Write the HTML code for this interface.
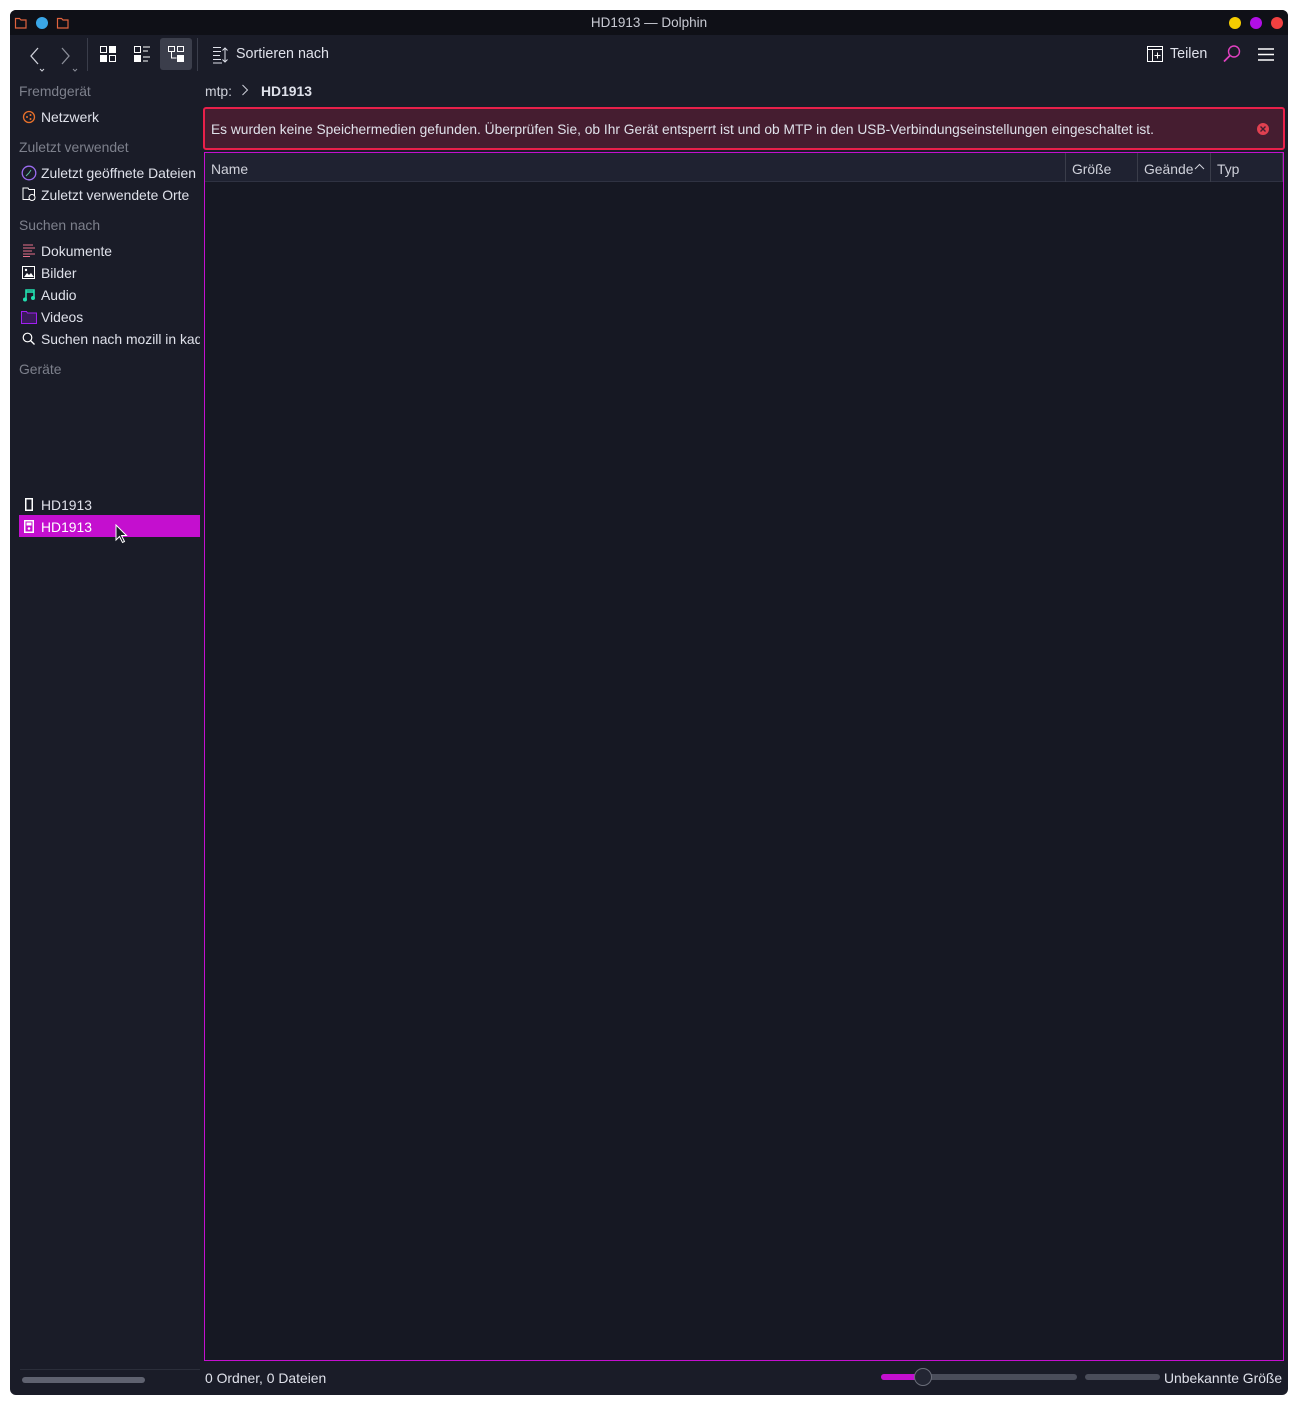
<!DOCTYPE html>
<html><head><meta charset="utf-8"><style>
*{box-sizing:border-box;margin:0;padding:0}
body{width:1298px;height:1405px;background:#fff;font-family:"Liberation Sans","DejaVu Sans",sans-serif;font-size:13.9px;color:#dfe1ea;position:relative;overflow:hidden}
.win{position:absolute;left:10px;top:10px;width:1278px;height:1385px;background:#1a1c28;border-radius:6px;overflow:hidden}
.title{position:absolute;left:0;top:0;width:100%;height:25px;background:#0f1017;text-align:center;line-height:26px;color:#c8cad3;font-size:13.5px}
.a{position:absolute;white-space:nowrap}
.dot{position:absolute;width:12px;height:12px;border-radius:50%;top:7px}
.side{color:#dfe1ea}
.hdr{color:#7d808c}
.sep{position:absolute;width:1px;background:#3a3d4a}
</style></head><body>
<div class="win">
<div class="title">HD1913 — Dolphin</div>
<svg class="a" style="left:4px;top:6px" width="60" height="14"><path d="M1.5 2.5h4l1.5 1.5h5v8h-10.5z" fill="none" stroke="#e0633e" stroke-width="1.2"/><circle cx="28" cy="7" r="6" fill="#3aa7e8"/><path d="M43.5 2.5h4l1.5 1.5h5v8h-10.5z" fill="none" stroke="#e0633e" stroke-width="1.2"/></svg>
<div class="dot" style="left:1219px;background:#f5cc00"></div>
<div class="dot" style="left:1240px;background:#b10ee6"></div>
<div class="dot" style="left:1261px;background:#f04040"></div>

<svg class="a" style="left:14px;top:34px" width="60" height="30"><path d="M14 4l-7 8 7 8" fill="none" stroke="#cfd1da" stroke-width="1.3"/><path d="M16 25l2 2 2-2" fill="none" stroke="#cfd1da"/><path d="M38 4l7 8-7 8" fill="none" stroke="#8a8d98" stroke-width="1.3"/><path d="M49 25l2 2 2-2" fill="none" stroke="#8a8d98"/></svg>
<div class="sep" style="left:77px;top:28px;height:33px"></div>
<svg class="a" style="left:90px;top:36px" width="16" height="16"><rect x="0.5" y="0.5" width="6" height="6" fill="none" stroke="#fff"/><rect x="9" y="0" width="7" height="7" fill="#fff"/><rect x="0" y="9" width="7" height="7" fill="#fff"/><rect x="9.5" y="9.5" width="6" height="6" fill="none" stroke="#fff"/></svg>
<svg class="a" style="left:124px;top:36px" width="16" height="16"><rect x="0.5" y="0.5" width="6" height="6" fill="none" stroke="#fff"/><rect x="0" y="9" width="7" height="7" fill="#fff"/><path d="M9 1h7M9 5h5M9 11h7M9 15h5" stroke="#fff"/></svg>
<div class="a" style="left:150px;top:28px;width:32px;height:32px;background:#3b3e4b;border-radius:3px"></div>
<svg class="a" style="left:158px;top:36px" width="16" height="16"><rect x="0.5" y="0.5" width="6" height="5" fill="none" stroke="#fff"/><rect x="9.5" y="0.5" width="6" height="5" fill="none" stroke="#fff"/><rect x="9" y="9" width="7" height="7" fill="#fff"/><path d="M3.5 6v6h5" fill="none" stroke="#fff"/></svg>
<div class="sep" style="left:187px;top:28px;height:33px"></div>
<svg class="a" style="left:202px;top:36px" width="18" height="18"><path d="M1 1.5h8M1 5.5h8M1 9.5h7M1 13.5h8M1 17h9" stroke="#dfe1ea"/><path d="M13 2v14M10.5 4.5l2.5-2.5 2.5 2.5M10.5 13.5l2.5 2.5 2.5-2.5" fill="none" stroke="#dfe1ea"/></svg>
<div class="a" style="left:226px;top:36px;font-size:14.3px">Sortieren nach</div>
<svg class="a" style="left:1137px;top:36px" width="16" height="16"><rect x="0.5" y="0.5" width="15" height="15" fill="none" stroke="#fff"/><path d="M0 3.5h16M5.5 3.5v12M10.5 6.5v6M7.5 9.5h6" stroke="#fff"/></svg>
<div class="a" style="left:1160px;top:36px;font-size:14.3px">Teilen</div>
<svg class="a" style="left:1212px;top:34px" width="20" height="20"><circle cx="12" cy="7.5" r="5.5" fill="none" stroke="#e040c0" stroke-width="1.4"/><path d="M8 11.5l-6 6" stroke="#e040c0" stroke-width="1.8"/></svg>
<svg class="a" style="left:1248px;top:38px" width="16" height="13"><path d="M0 1h16M0 6.5h16M0 12h16" stroke="#fff" stroke-width="1.5"/></svg>

<div class="a hdr" style="left:9px;top:73px">Fremdgerät</div>
<svg class="a" style="left:12px;top:100px" width="14" height="14"><circle cx="7" cy="7" r="5.5" fill="none" stroke="#e8702a" stroke-width="1.3"/><circle cx="5" cy="7" r="1" fill="#e8702a"/><circle cx="8.5" cy="5" r="1" fill="#e8702a"/><circle cx="8.5" cy="9" r="1" fill="#e8702a"/></svg>
<div class="a side" style="left:31px;top:99px">Netzwerk</div>
<div class="a hdr" style="left:9px;top:129px">Zuletzt verwendet</div>
<svg class="a" style="left:11px;top:155px" width="16" height="16"><circle cx="8" cy="8" r="6.8" fill="none" stroke="#9b6cf0" stroke-width="1.3"/><path d="M8 8l-3 3M8 8l2-3" stroke="#5fc0a0"/></svg>
<div class="a side" style="left:31px;top:155px">Zuletzt geöffnete Dateien</div>
<svg class="a" style="left:12px;top:177px" width="14" height="14"><path d="M1 1h5l1 1.5h5.5v10h-11.5z" fill="none" stroke="#fff"/><circle cx="10" cy="10.5" r="3" fill="#1a1c28" stroke="#fff"/></svg>
<div class="a side" style="left:31px;top:177px">Zuletzt verwendete Orte</div>
<div class="a hdr" style="left:9px;top:207px">Suchen nach</div>
<svg class="a" style="left:12px;top:234px" width="14" height="13"><path d="M1 1h10M1 4h12M1 7h9M1 10h12M1 12.5h7" stroke="#e8708a"/></svg>
<div class="a side" style="left:31px;top:233px">Dokumente</div>
<svg class="a" style="left:12px;top:256px" width="14" height="14"><rect x="0.5" y="0.5" width="12" height="12" fill="none" stroke="#fff"/><path d="M2 11l3-4 2 2 2-2 3 4z" fill="#fff"/><circle cx="4" cy="4" r="1.2" fill="#fff"/></svg>
<div class="a side" style="left:31px;top:255px">Bilder</div>
<svg class="a" style="left:12px;top:278px" width="14" height="14"><path d="M4 11V2h8v8" fill="none" stroke="#22e0b0" stroke-width="1.6"/><circle cx="3" cy="11.5" r="2" fill="#22e0b0"/><circle cx="11" cy="10" r="2" fill="#22e0b0"/><path d="M4 4h8" stroke="#22e0b0" stroke-width="1.6"/></svg>
<div class="a side" style="left:31px;top:277px">Audio</div>
<svg class="a" style="left:11px;top:301px" width="16" height="13"><path d="M0.5 0.5h5l1 1.5h9v10.5h-15z" fill="#3a1a5a" stroke="#a020f0"/></svg>
<div class="a side" style="left:31px;top:299px">Videos</div>
<svg class="a" style="left:12px;top:322px" width="14" height="14"><circle cx="5.5" cy="5.5" r="4.3" fill="none" stroke="#fff" stroke-width="1.2"/><path d="M8.5 8.5l4 4" stroke="#fff" stroke-width="1.3"/></svg>
<div class="a side" style="left:31px;top:321px;width:159px;overflow:hidden">Suchen nach mozill in kadu</div>
<div class="a hdr" style="left:9px;top:351px">Geräte</div>
<svg class="a" style="left:15px;top:488px" width="8" height="13"><rect x="0.75" y="0.75" width="6.5" height="11.5" fill="none" stroke="#fff" stroke-width="1.5"/></svg>
<div class="a side" style="left:31px;top:487px">HD1913</div>
<div class="a" style="left:9px;top:505px;width:181px;height:22px;background:#c40fcf"></div>
<svg class="a" style="left:14px;top:510px" width="10" height="13"><rect x="0.75" y="0.75" width="8.5" height="11.5" fill="none" stroke="#fff" stroke-width="1.5"/><rect x="2.5" y="2.5" width="5" height="3" fill="#fff"/><circle cx="5" cy="8.5" r="1.3" fill="#fff"/></svg>
<div class="a" style="left:31px;top:509px;color:#fff">HD1913</div>
<svg class="a" style="left:105px;top:514px" width="14" height="20"><path d="M1 1v15l3.5-3.5 3 6 2-1-3-6h5z" fill="#1a1c28" stroke="#fff"/></svg>
<div class="a" style="left:10px;top:1359px;width:180px;height:1px;background:#2b2e3a"></div>
<div class="a" style="left:12px;top:1367px;width:123px;height:6px;border-radius:3px;background:#5f6270"></div>

<div class="a" style="left:195px;top:73px;color:#cfd1da">mtp:</div>
<svg class="a" style="left:231px;top:74px" width="8" height="12"><path d="M1.5 1l5 5-5 5" fill="none" stroke="#cfd1da"/></svg>
<div class="a" style="left:251px;top:73px;font-weight:bold;color:#dfe1ea">HD1913</div>
<div class="a" style="left:193px;top:97px;width:1082px;height:43px;background:#451d30;border:2px solid #e8204a;border-radius:3px"></div>
<div class="a" style="left:201px;top:112px;font-size:13.75px;color:#dfe1ea">Es wurden keine Speichermedien gefunden. Überprüfen Sie, ob Ihr Gerät entsperrt ist und ob MTP in den USB-Verbindungseinstellungen eingeschaltet ist.</div>
<svg class="a" style="left:1246px;top:112px" width="14" height="14"><circle cx="7" cy="7" r="6" fill="#e04050"/><path d="M4.5 4.5l5 5M9.5 4.5l-5 5" stroke="#451d30" stroke-width="1.4"/></svg>
<div class="a" style="left:194px;top:142px;width:1080px;height:1209px;background:#161823;border:1px solid #c40fcf"></div>
<div class="a" style="left:195px;top:143px;width:1078px;height:29px;background:#1f2231;border-bottom:1px solid #2f3242"></div>
<div class="a" style="left:201px;top:151px;color:#cfd1da">Name</div>
<div class="sep" style="left:1055px;top:143px;height:29px"></div>
<div class="a" style="left:1062px;top:151px;color:#cfd1da">Größe</div>
<div class="sep" style="left:1127px;top:143px;height:29px"></div>
<div class="a" style="left:1134px;top:151px;color:#cfd1da">Geände</div>
<svg class="a" style="left:1184px;top:153px" width="11" height="8"><path d="M1 6l4.5-4.5 4.5 4.5" fill="none" stroke="#cfd1da"/></svg>
<div class="sep" style="left:1200px;top:143px;height:29px"></div>
<div class="a" style="left:1207px;top:151px;color:#cfd1da">Typ</div>
<div class="sep" style="left:1272px;top:143px;height:29px"></div>

<div class="a" style="left:195px;top:1360px;color:#dfe1ea">0 Ordner, 0 Dateien</div>
<div class="a" style="left:871px;top:1364px;width:196px;height:6px;border-radius:3px;background:#4a4d5a"></div>
<div class="a" style="left:871px;top:1364px;width:36px;height:6px;border-radius:3px;background:#c40fcf"></div>
<div class="a" style="left:904px;top:1358px;width:18px;height:18px;border-radius:50%;background:#232633;border:1px solid #6b6e7a"></div>
<div class="a" style="left:1075px;top:1364px;width:75px;height:6px;border-radius:3px;background:#4a4d5a"></div>
<div class="a" style="left:1154px;top:1360px;color:#dfe1ea">Unbekannte Größe</div>
</div>
</body></html>
